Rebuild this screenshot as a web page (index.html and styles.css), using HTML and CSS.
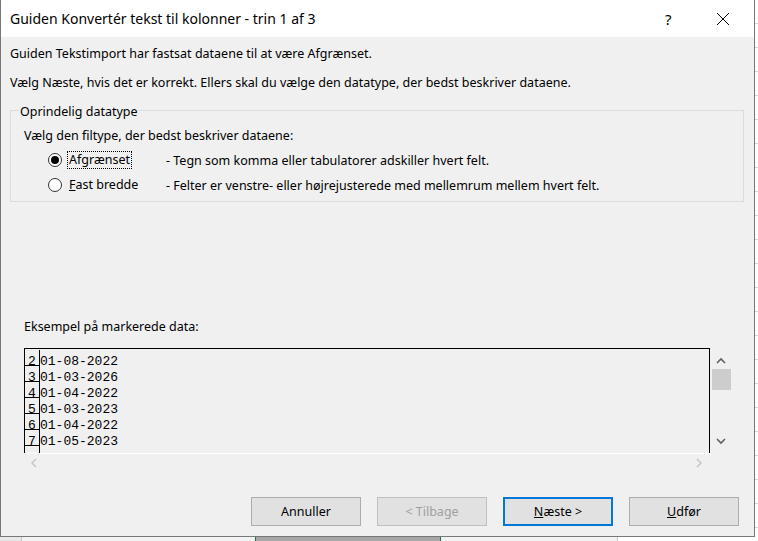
FILE: index.html
```html
<!DOCTYPE html>
<html>
<head>
<title>Guiden Konvertér tekst til kolonner</title>
<link rel="stylesheet" href="styles.css">
</head>
<body>
  <div class="desk">
  <div class="dialog">
    <div class="titlebar">
      <span class="title">Guiden Konvertér tekst til kolonner - trin 1 af 3</span>
      <span class="help">?</span>
      <span class="close">
        <svg width="14" height="14" viewBox="0 0 14 14"><path d="M1 1 L13 13 M13 1 L1 13" stroke="#000" stroke-width="1" fill="none"/></svg>
      </span>
    </div>

    <div class="content">
      <p class="intro">Guiden Tekstimport har fastsat dataene til at være Afgrænset.</p>
      <p class="intro second">Vælg Næste, hvis det er korrekt. Ellers skal du vælge den datatype, der bedst beskriver dataene.</p>

      <fieldset class="group">
        <legend>Oprindelig datatype</legend>
        <div class="prompt">Vælg den filtype, der bedst beskriver dataene:</div>
        <div class="option">
          <span class="radio checked"></span>
          <span class="opt-label"><span class="focus">Af<u>g</u>rænset</span></span>
          <span class="opt-desc">- Tegn som komma eller tabulatorer adskiller hvert felt.</span>
        </div>
        <div class="option">
          <span class="radio"></span>
          <span class="opt-label"><span class="nofocus"><u>F</u>ast bredde</span></span>
          <span class="opt-desc">- Felter er venstre- eller højrejusterede med mellemrum mellem hvert felt.</span>
        </div>
      </fieldset>

      <div class="preview-label">Eksempel på markerede data:</div>

      <div class="preview">
        <div class="preview-top">
          <div class="sheet">
            <div class="row"><span class="num">2</span><span class="cell">01-08-2022</span></div>
            <div class="row"><span class="num">3</span><span class="cell">01-03-2026</span></div>
            <div class="row"><span class="num">4</span><span class="cell">01-04-2022</span></div>
            <div class="row"><span class="num">5</span><span class="cell">01-03-2023</span></div>
            <div class="row"><span class="num">6</span><span class="cell">01-04-2022</span></div>
            <div class="row"><span class="num">7</span><span class="cell">01-05-2023</span></div>
            <div class="row"><span class="num"></span><span class="cell"></span></div>
          </div>
          <div class="vscroll">
            <svg class="arrow" width="10" height="7" viewBox="0 0 10 7"><path d="M1 6 L5 2 L9 6" stroke="#606060" stroke-width="1.6" fill="none"/></svg>
            <div class="thumb"></div>
            <div class="vspace"></div>
            <svg class="arrow" width="10" height="7" viewBox="0 0 10 7"><path d="M1 1 L5 5 L9 1" stroke="#606060" stroke-width="1.6" fill="none"/></svg>
          </div>
        </div>
        <div class="hscroll">
          <svg width="7" height="10" viewBox="0 0 7 10"><path d="M6 1 L2 5 L6 9" stroke="#c4c4c4" stroke-width="1.4" fill="none"/></svg>
          <svg width="7" height="10" viewBox="0 0 7 10"><path d="M1 1 L5 5 L1 9" stroke="#c4c4c4" stroke-width="1.4" fill="none"/></svg>
        </div>
      </div>

      <div class="buttons">
        <button class="btn">Annuller</button>
        <button class="btn disabled">&lt; Tilbage</button>
        <button class="btn default"><u>N</u>æste &gt;</button>
        <button class="btn"><u>U</u>dfør</button>
      </div>
    </div>
  </div>
  <div class="sheet-strip"></div>
  </div>
</body>
</html>
```

FILE: styles.css
```css
html, body {
  margin: 0;
  padding: 0;
}

body {
  width: 758px;
  height: 541px;
  overflow: hidden;
  font-family: "Segoe UI", "Noto Sans", sans-serif;
  font-size: 12.5px;
  color: #000;
  background: #fff;
}

/* excel sheet peeking out behind the dialog */
.desk {
  height: 541px;
  background: repeating-linear-gradient(#fff 0, #fff 23px, #d4d4d4 23px, #d4d4d4 24px);
}

.dialog {
  width: 753px;
  height: 536px;
  border-left: 1px solid #777;
  border-right: 1px solid #777;
  border-bottom: 1px solid #777;
  background: #f0f0f0;
  display: flex;
  flex-direction: column;
}

.sheet-strip {
  height: 4px;
  background: linear-gradient(to right,
    #e8e8e8 0, #e8e8e8 21px, #c8c8c8 21px, #c8c8c8 22px,
    #f2f2f2 22px, #f2f2f2 255px, #217346 255px, #217346 256px,
    #a6a6a6 256px, #a6a6a6 440px, #217346 440px, #217346 441px,
    #f2f2f2 441px, #f2f2f2 617px, #c8c8c8 617px, #c8c8c8 618px, #fff 618px);
}

.titlebar {
  height: 37px;
  background: #fff;
  display: flex;
  align-items: center;
  flex-shrink: 0;
}

.title {
  font-size: 14px;
  padding-left: 9px;
  flex: 1;
}

.help {
  font-size: 15px;
  width: 20px;
  margin-right: 31px;
}

.close {
  display: flex;
  margin-right: 24px;
}

.content {
  flex: 1;
  padding: 0 10px 0 9px;
  display: flex;
  flex-direction: column;
}

.intro {
  margin: 9px 0 0;
  line-height: 16px;
}

.intro.second {
  margin-top: 13px;
}

.group {
  margin: 10px 0 0;
  padding: 0 0 7px 13px;
  border: 1px solid #dcdcdc;
  min-width: 0;
}

.group legend {
  margin-left: -5px;
  padding: 4px 1px 0;
  line-height: 14px;
}

.prompt {
  margin-top: 9px;
  line-height: 16px;
}

.option {
  display: flex;
  align-items: center;
  height: 18px;
  margin-top: 7px;
  padding-left: 24px;
}

.option + .option {
  margin-top: 7px;
}

.radio {
  width: 12px;
  height: 12px;
  border: 1px solid #333;
  border-radius: 50%;
  background: #fff;
  display: flex;
  align-items: center;
  justify-content: center;
  flex-shrink: 0;
}

.radio.checked::after {
  content: "";
  width: 8px;
  height: 8px;
  border-radius: 50%;
  background: #000;
}

.opt-label {
  width: 99px;
  margin-left: 5px;
}

.focus, .nofocus {
  display: inline-block;
  padding: 0 1px;
  line-height: 16px;
  border: 1px dotted transparent;
}

.focus {
  border-color: #000;
}

.preview-label {
  margin-top: 117px;
  padding-left: 14px;
  line-height: 16px;
}

.preview {
  margin-top: 13px;
  margin-left: 14px;
}

.preview-top {
  display: flex;
}

.sheet {
  width: 684px;
  height: 103px;
  border: 1px solid #000;
  border-bottom: none;
  padding-top: 1px;
  overflow: hidden;
  box-sizing: content-box;
  font-family: "Liberation Mono", "Courier New", monospace;
  font-size: 13px;
}

.row {
  display: flex;
  height: 16px;
}

.num {
  width: 15px;
  border-right: 1px solid #000;
  border-bottom: 1px solid #000;
  text-align: center;
  line-height: 7px;
  padding-top: 8px;
  box-sizing: border-box;
  height: 16px;
}

.cell {
  line-height: 7px;
  padding-top: 8px;
}

.vscroll {
  width: 20px;
  margin-left: 1px;
  display: flex;
  flex-direction: column;
  align-items: center;
  padding-top: 9px;
}

.thumb {
  width: 19px;
  height: 21px;
  margin-top: 5px;
  background: #cdcdcd;
}

.vspace {
  height: 48px;
}

.hscroll {
  width: 686px;
  height: 18px;
  border-top: 1px solid #fff;
  display: flex;
  justify-content: space-between;
  align-items: center;
  padding: 0 7px 0 6px;
  box-sizing: border-box;
}

.buttons {
  margin-top: auto;
  margin-bottom: 10px;
  display: flex;
  justify-content: flex-end;
  gap: 16px;
  padding-right: 5px;
}

.btn {
  width: 110px;
  height: 29px;
  background: #e1e1e1;
  border: 1px solid #adadad;
  font-family: "Segoe UI", "Noto Sans", sans-serif;
  font-size: 12.5px;
  color: #000;
  padding: 0;
  margin: 0;
}

.btn.disabled {
  color: #a0a0a0;
  border-color: #bfbfbf;
}

.btn.default {
  border: 2px solid #0078d7;
}
```
